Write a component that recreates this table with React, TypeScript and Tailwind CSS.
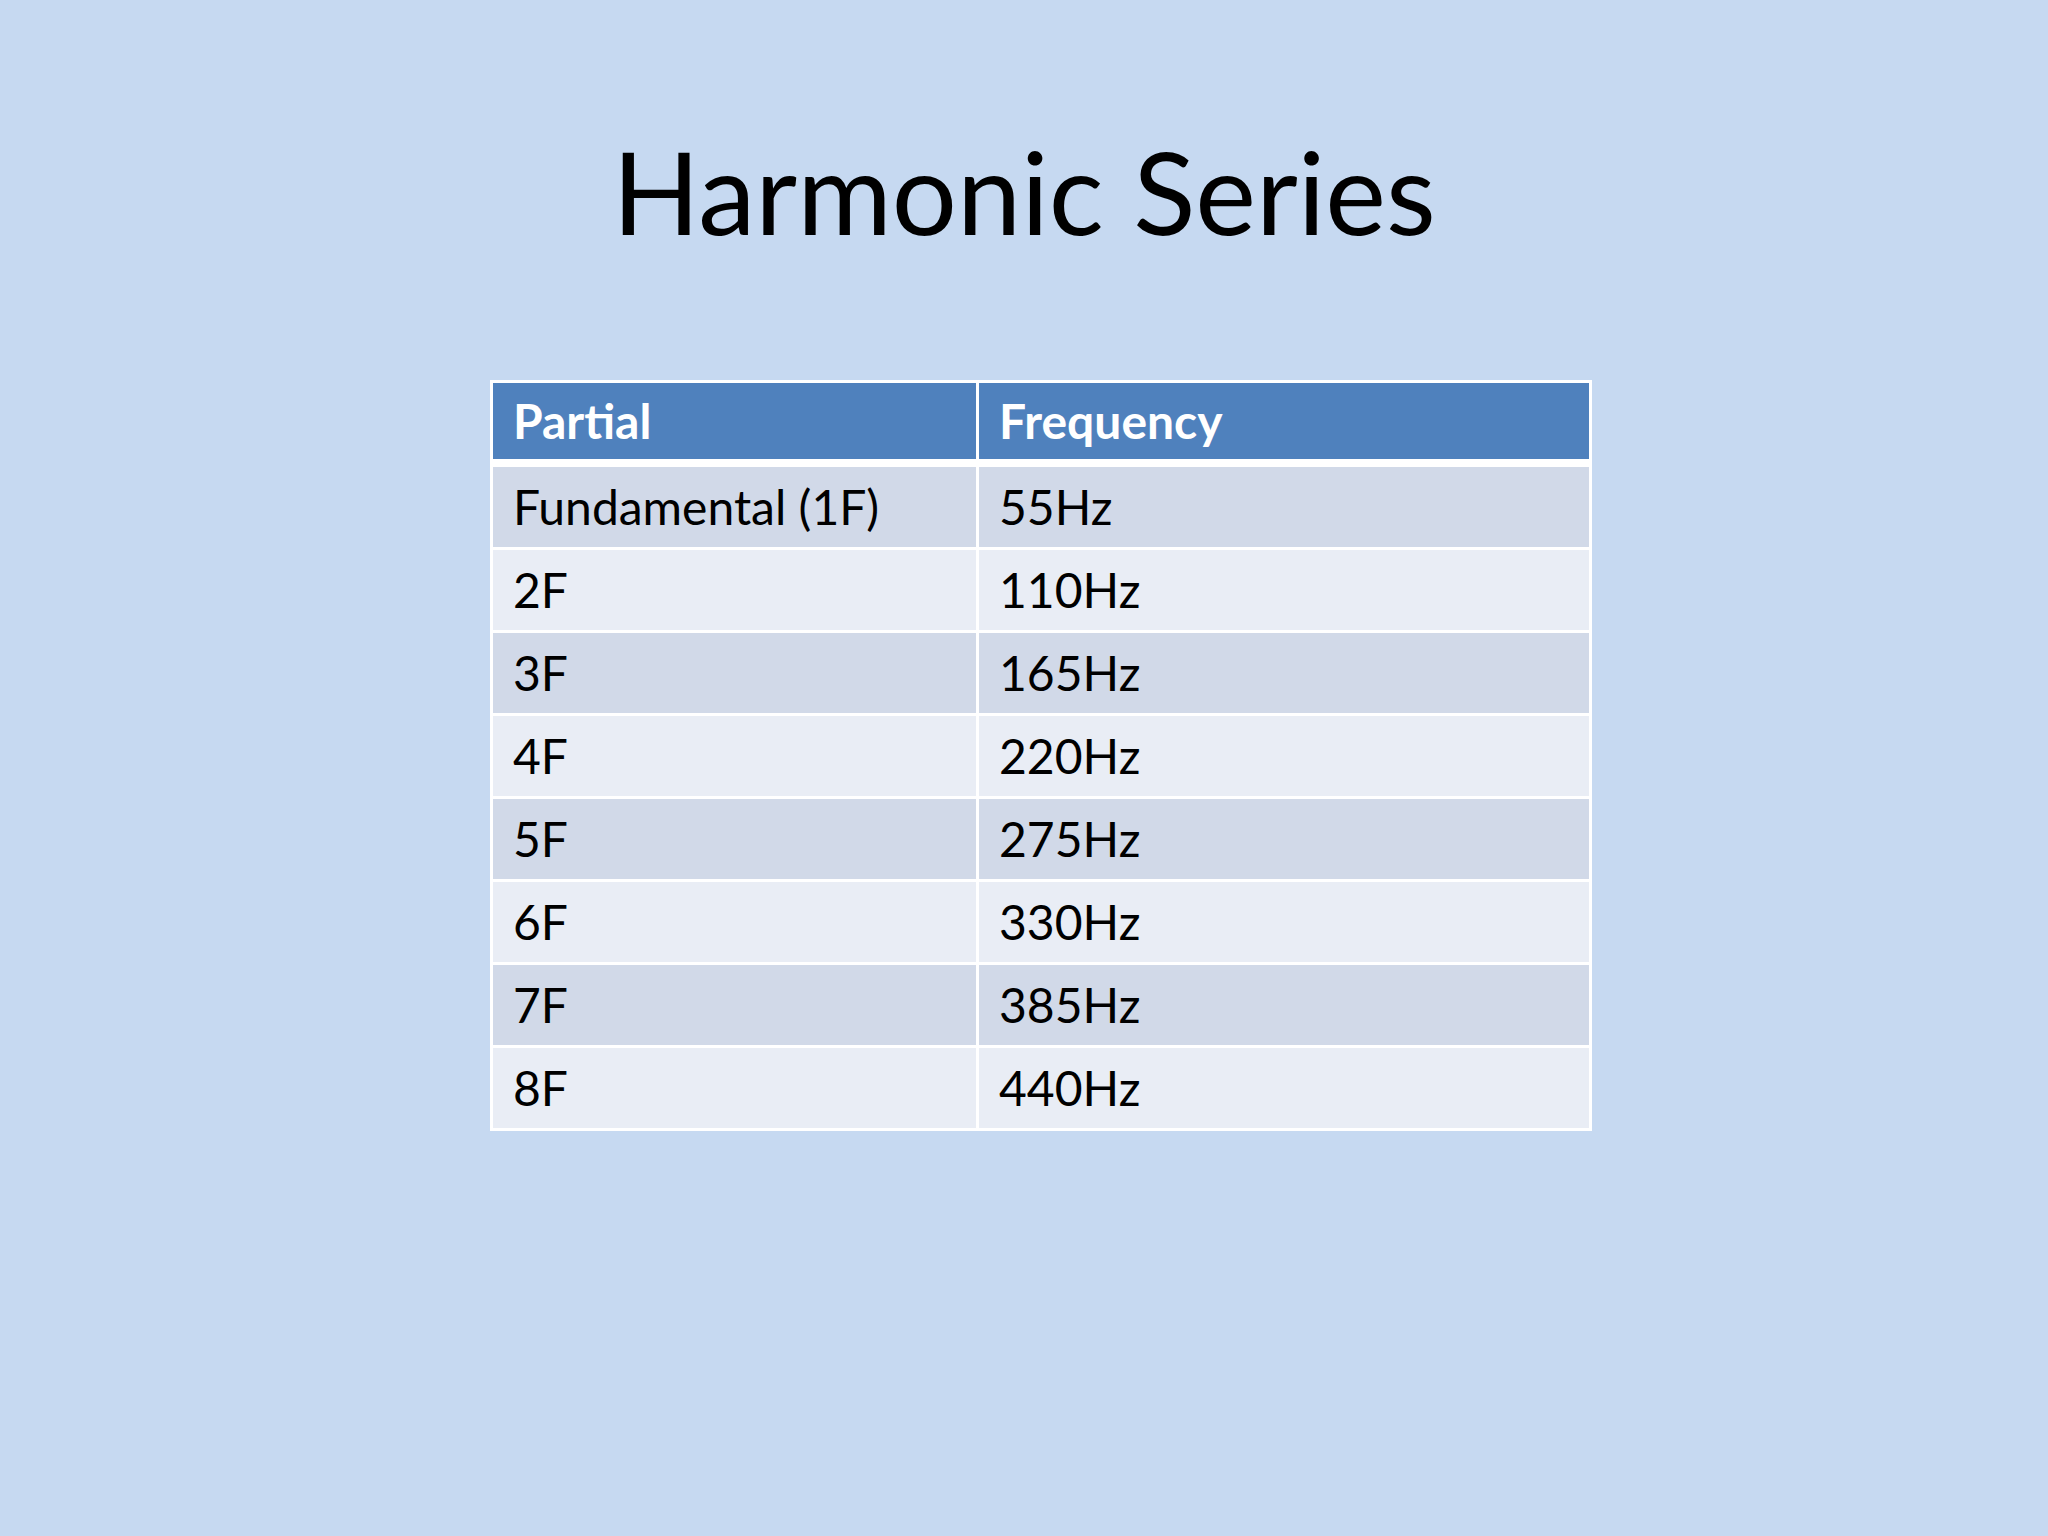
import React from 'react';

const rows = [
    { partial: 'Fundamental (1F)', freq: '55Hz' },
    { partial: '2F', freq: '110Hz' },
    { partial: '3F', freq: '165Hz' },
    { partial: '4F', freq: '220Hz' },
    { partial: '5F', freq: '275Hz' },
    { partial: '6F', freq: '330Hz' },
    { partial: '7F', freq: '385Hz' },
    { partial: '8F', freq: '440Hz' },
];

const App: React.FC = () => {
    return (
        <div className="w-full h-[1536px] bg-[#c6d9f1] flex flex-col items-center font-['Lato',_'Open_Sans',_sans-serif]">
            {/* Titulo */}
            <h1 className="mt-[133px] text-[115px] leading-none text-black">Harmonic Series</h1>

            {/* Tabla */}
            <div className="self-start ml-[490px] mt-[132px] w-[1102px] bg-white p-[3px]">
                <div className="grid grid-cols-[483px_610px] gap-x-[3px] mb-[8px]">
                    <div className="h-[76px] bg-[#4f81bd] flex items-center px-[20px] text-white font-bold text-[48px] leading-none">Partial</div>
                    <div className="h-[76px] bg-[#4f81bd] flex items-center px-[20px] text-white font-bold text-[48px] leading-none">Frequency</div>
                </div>
                <div className="flex flex-col gap-y-[3px]">
                    {rows.map((row, i) => (
                        <div key={row.partial} className="grid grid-cols-[483px_610px] gap-x-[3px]">
                            <div className={`h-[80px] flex items-center px-[20px] text-[48px] leading-none text-black ${i % 2 === 0 ? 'bg-[#d1d9e8]' : 'bg-[#e9edf5]'}`}>
                                {row.partial}
                            </div>
                            <div className={`h-[80px] flex items-center px-[20px] text-[48px] leading-none text-black ${i % 2 === 0 ? 'bg-[#d1d9e8]' : 'bg-[#e9edf5]'}`}>
                                {row.freq}
                            </div>
                        </div>
                    ))}
                </div>
            </div>
        </div>
    );
};

export default App;
